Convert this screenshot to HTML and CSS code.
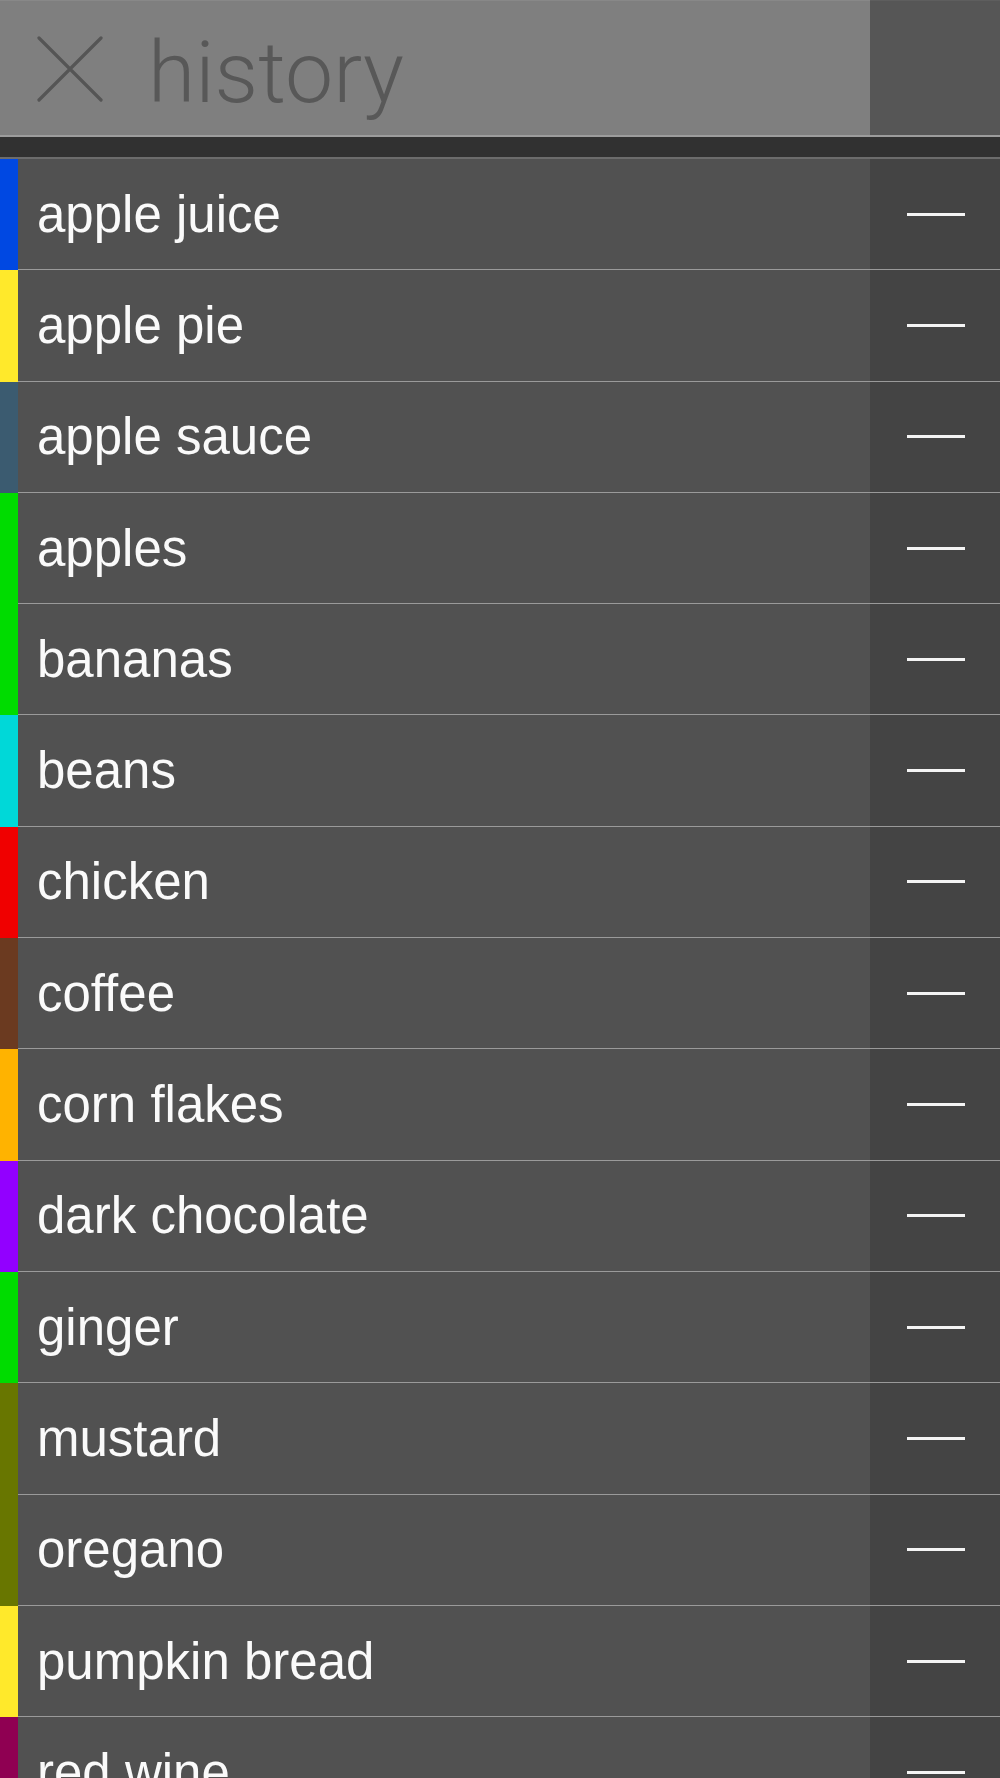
FILE: index.html
```html
<!DOCTYPE html>
<html lang="en">
<head>
    <meta charset="UTF-8">
    <meta name="viewport" content="width=device-width, initial-scale=1.0">
    <title>History</title>
    <link rel="stylesheet" href="styles.css">
</head>
<body>

    <div class="header">
        <div class="search">
            <svg class="close" width="66" height="66" viewBox="0 0 66 66">
                <path d="M2 2 L64 64 M64 2 L2 64" stroke="#555" stroke-width="3.2" stroke-linecap="round" fill="none"/>
            </svg>
            <span class="title">history</span>
        </div>
        <div class="side"></div>
    </div>
    <div class="divider"></div>

    <div class="list">
        <div class="row"><div class="swatch c-blue"></div><div class="cell"><span class="name">apple juice</span><span class="action"><i class="dash"></i></span></div></div>
        <div class="row"><div class="swatch c-yellow"></div><div class="cell"><span class="name">apple pie</span><span class="action"><i class="dash"></i></span></div></div>
        <div class="row"><div class="swatch c-slate"></div><div class="cell"><span class="name">apple sauce</span><span class="action"><i class="dash"></i></span></div></div>
        <div class="row"><div class="swatch c-green"></div><div class="cell"><span class="name">apples</span><span class="action"><i class="dash"></i></span></div></div>
        <div class="row"><div class="swatch c-green"></div><div class="cell"><span class="name">bananas</span><span class="action"><i class="dash"></i></span></div></div>
        <div class="row"><div class="swatch c-cyan"></div><div class="cell"><span class="name">beans</span><span class="action"><i class="dash"></i></span></div></div>
        <div class="row"><div class="swatch c-red"></div><div class="cell"><span class="name">chicken</span><span class="action"><i class="dash"></i></span></div></div>
        <div class="row"><div class="swatch c-brown"></div><div class="cell"><span class="name">coffee</span><span class="action"><i class="dash"></i></span></div></div>
        <div class="row"><div class="swatch c-orange"></div><div class="cell"><span class="name">corn flakes</span><span class="action"><i class="dash"></i></span></div></div>
        <div class="row"><div class="swatch c-purple"></div><div class="cell"><span class="name">dark chocolate</span><span class="action"><i class="dash"></i></span></div></div>
        <div class="row"><div class="swatch c-green"></div><div class="cell"><span class="name">ginger</span><span class="action"><i class="dash"></i></span></div></div>
        <div class="row"><div class="swatch c-olive"></div><div class="cell"><span class="name">mustard</span><span class="action"><i class="dash"></i></span></div></div>
        <div class="row"><div class="swatch c-olive"></div><div class="cell"><span class="name">oregano</span><span class="action"><i class="dash"></i></span></div></div>
        <div class="row"><div class="swatch c-yellow"></div><div class="cell"><span class="name">pumpkin bread</span><span class="action"><i class="dash"></i></span></div></div>
        <div class="row"><div class="swatch c-maroon"></div><div class="cell"><span class="name">red wine</span><span class="action"><i class="dash"></i></span></div></div>
    </div>

</body>
</html>
```

FILE: styles.css
```css
html, body {
    height: 1778px;
    overflow: hidden;
}
body {
    margin: 0;
    background-color: #515151;
    font-family: "Liberation Sans", Arial, sans-serif;
}
.header {
    display: flex;
    height: 135px;
    border-bottom: 2px solid #9c9c9c;
}
.search {
    flex: 1;
    display: flex;
    align-items: center;
    background-color: #7f7f7f;
    border-top: 1px solid #888;
    padding-left: 37px;
}
.close {
    margin-top: 1px;
}
.title {
    margin-left: 45px;
    margin-top: 8px;
    font-family: Roboto, "Liberation Sans", sans-serif;
    font-weight: 300;
    font-size: 86px;
    color: #585858;
}
.side {
    width: 130px;
    background-color: #565656;
    border-top: 1px solid #5e5e5e;
}
.divider {
    height: 20px;
    background-color: #313131;
    border-bottom: 2px solid #6c6c6c;
}
.row {
    display: flex;
    height: 111.3px;
}
.swatch {
    width: 18px;
}
.cell {
    flex: 1;
    display: flex;
    border-bottom: 1px solid #9a9a9a;
}
.name {
    flex: 1;
    display: flex;
    align-items: center;
    padding-left: 19px;
    font-size: 51px;
    color: #fafafa;
}
.action {
    width: 130px;
    display: flex;
    align-items: center;
    justify-content: center;
    background-color: #444;
}
.dash {
    display: block;
    width: 58px;
    height: 3px;
    background-color: #f4f4f4;
    margin-left: 2px;
}
.c-blue { background-color: #0048e2; }
.c-yellow { background-color: #ffe92b; }
.c-slate { background-color: #3b5b70; }
.c-green { background-color: #00dc00; }
.c-cyan { background-color: #00d8d8; }
.c-red { background-color: #f00000; }
.c-brown { background-color: #6b3a20; }
.c-orange { background-color: #ffb300; }
.c-purple { background-color: #9200ff; }
.c-olive { background-color: #687600; }
.c-maroon { background-color: #8f0052; }
```
